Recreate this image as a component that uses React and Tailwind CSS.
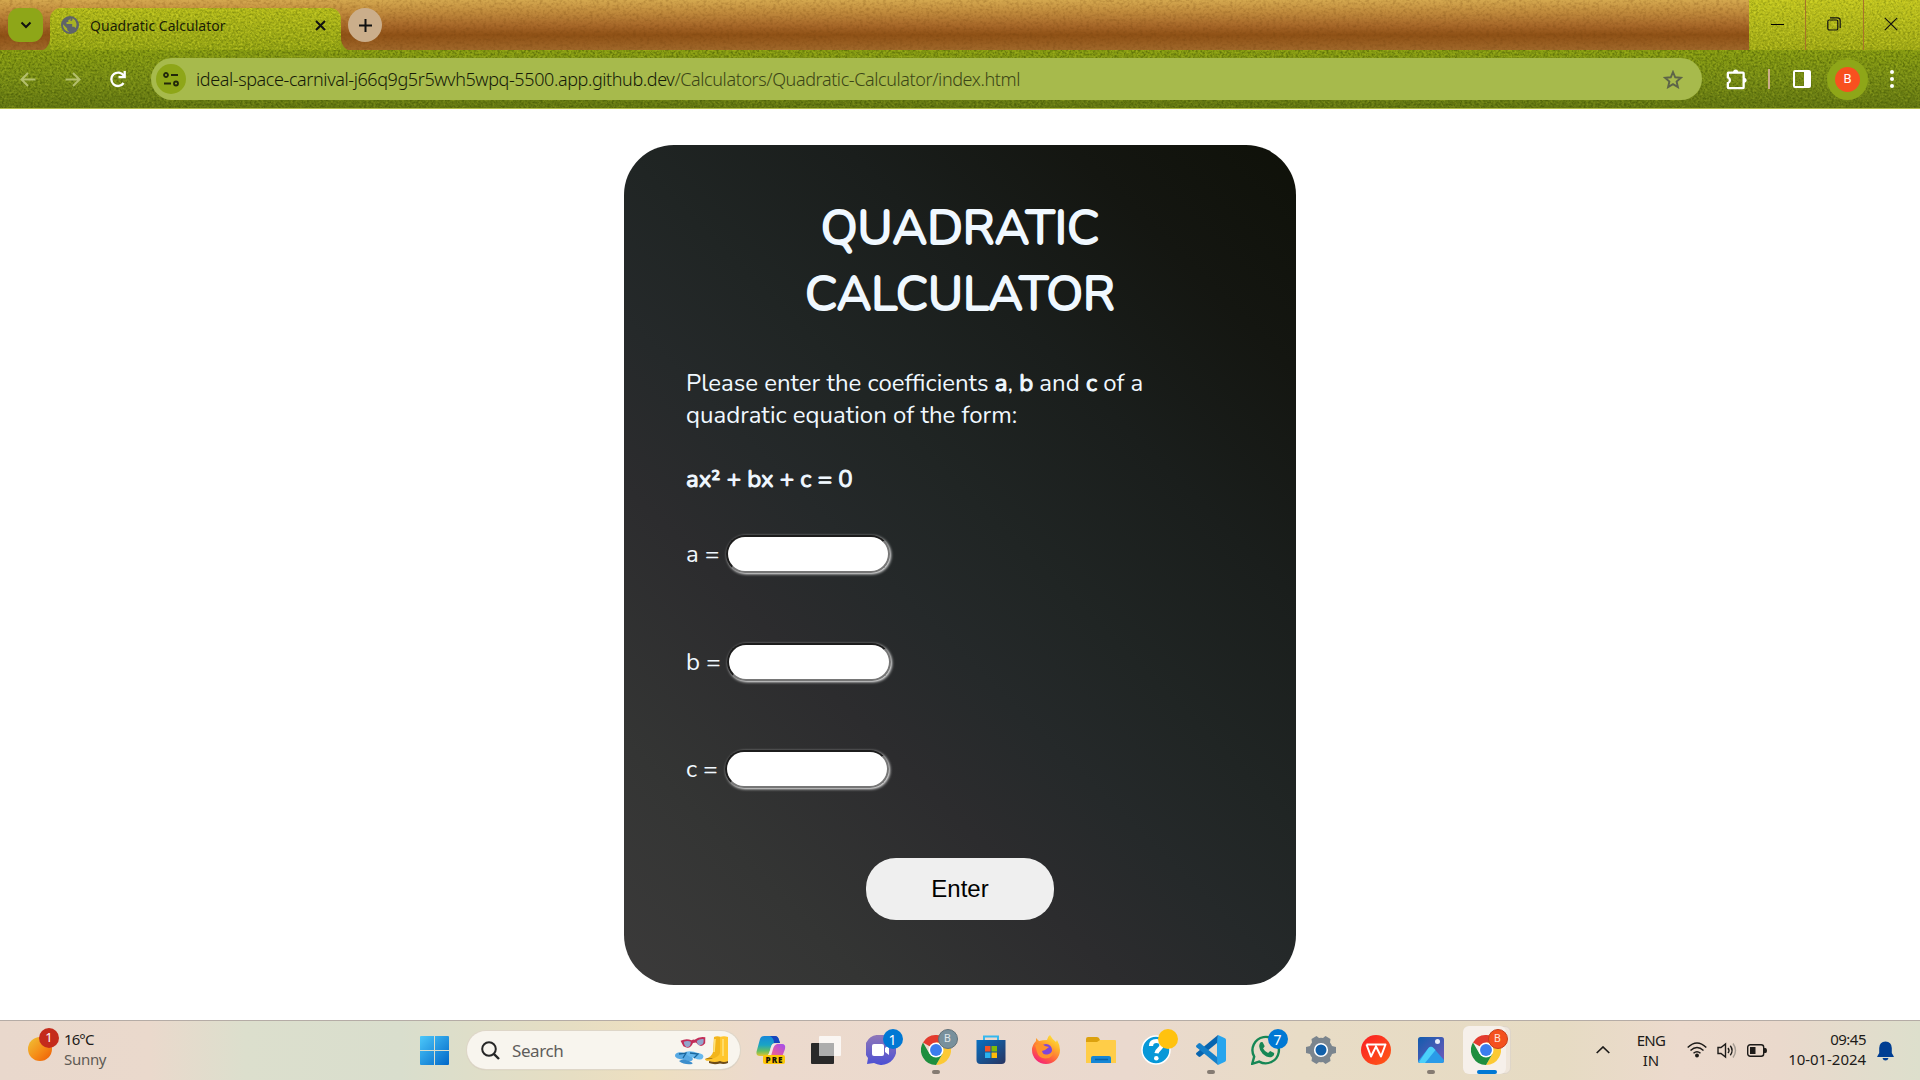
import React from "react";

function Spread({ className = "", children }) {
  return <span className={"inline-block whitespace-nowrap " + className}>{children}</span>;
}

function Strong({ children }) {
  return <span className="[-webkit-text-stroke:1px_currentColor]">{children}</span>;
}

function Texture({ id, seed, w, h, className, matrix, freq = "0.42 0.5" }) {
  return (
    <svg className={"absolute inset-0 pointer-events-none " + className} width={w} height={h} aria-hidden="true">
      <filter id={id} x="0" y="0" width="100%" height="100%" colorInterpolationFilters="sRGB">
        <feTurbulence type="fractalNoise" baseFrequency={freq} numOctaves="2" seed={seed} stitchTiles="stitch" />
        <feColorMatrix type="matrix" values={matrix} />
      </filter>
      <rect width={w} height={h} filter={`url(#${id})`} />
    </svg>
  );
}

const DARK_GRASS = "0 0 0 0 0.22  0 0 0 0 0.29  0 0 0 0 0  2.6 0 0 0 -1.0";
const LIGHT_GRASS = "0 0 0 0 0.86  0 0 0 0 0.88  0 0 0 0 0.2  0 2.6 0 0 -1.15";
const WOOD = "0 0 0 0 0.4  0 0 0 0 0.22  0 0 0 0 0.03  1.6 0 0 0 -0.7";

function TabStrip() {
  return (
    <div className="relative flex h-[50px] bg-[linear-gradient(180deg,#d5a94f_0%,#c08a3c_25%,#a8692a_50%,#8f5116_70%,#a0682a_100%)]">
      <Texture id="wood" seed="4" w="1920" h="50" matrix={WOOD} freq="0.3 0.35" className="opacity-40" />
      <div className="relative flex w-full items-start">
        <button className="ml-2 mt-2 flex h-[34px] w-[35px] shrink-0 items-center justify-center rounded-[11px] bg-[#8ea618]">
          <svg width="12" height="8" viewBox="0 0 12 8" fill="none" stroke="#111" strokeWidth="2"><path d="M1.5 1.5 6 6l4.500-4.500" /></svg>
        </button>
        <svg className="mt-10 h-[10px] w-[7px] shrink-0" viewBox="0 0 7 10"><path d="M7 0v10H0Q5 8 7 0" fill="#8b9b14" /></svg>
        <div className="relative mt-2 flex h-[42px] w-[291px] shrink-0 items-start overflow-hidden rounded-t-[11px] bg-[linear-gradient(180deg,#b9be1c,#95a514)]">
          <Texture id="tabDark" seed="7" w="291" h="42" matrix={DARK_GRASS} className="opacity-35" />
          <Texture id="tabLight" seed="7" w="291" h="42" matrix={LIGHT_GRASS} className="opacity-50" />
          <div className="relative flex h-[34px] w-full items-center pl-[11px] pr-[15px]">
            <svg width="18" height="18" viewBox="0 0 18 18"><circle cx="9" cy="9" r="9" fill="#5f6368" /><path d="M9.500 1.800c-.2 1.600-.8 2.100-2.200 2.200v2H5.500v2h5.700v2.800h1.300c1 0 1.700.6 2 1.500A7.200 7.200 0 0 0 12 2.500l-.5-.2v1.200c0 .8-.8 1.500-2 1.500ZM2 8.200l4.200 4.200v1.200c0 .9.700 1.500 1.600 1.600V16A7.200 7.200 0 0 1 2 8.200Z" fill="#a9b325" /></svg>
            <Spread className="ml-[11px] text-[14px] tracking-[0.040px] text-[#1b1e06]">Quadratic Calculator</Spread>
            <svg className="ml-auto" width="11" height="11" viewBox="0 0 11 11" stroke="#111" strokeWidth="2"><path d="m1 1 9 9M10 1l-9 9" /></svg>
          </div>
        </div>
        <svg className="mt-10 h-[10px] w-[7px] shrink-0" viewBox="0 0 7 10"><path d="M0 0v10h7Q2 8 0 0" fill="#8b9b14" /></svg>
        <button className="mt-2 flex size-[34px] shrink-0 items-center justify-center rounded-full bg-[#cbae8b]">
          <svg width="13" height="13" viewBox="0 0 13 13" stroke="#111" strokeWidth="2"><path d="M6.500 0v13M0 6.500h13" /></svg>
        </button>
        <div className="relative ml-auto flex h-[50px] w-[171px] overflow-hidden bg-[linear-gradient(180deg,#c6c820,#a0a815)]">
          <Texture id="winDark" seed="9" w="171" h="50" matrix={DARK_GRASS} className="opacity-30" />
          <Texture id="winLight" seed="9" w="171" h="50" matrix={LIGHT_GRASS} className="opacity-60" />
          <div className="relative flex w-[57px] items-center justify-center border-r border-[#a8732a]"><i className="mt-[-1px] h-px w-[13px] bg-black" /></div>
          <div className="relative flex w-[58px] items-center justify-center border-r border-[#a8732a] pr-[2px]">
            <svg className="-mt-0.5" width="14" height="14" viewBox="0 0 14 14" fill="none" stroke="#111" strokeWidth="1.200"><rect x=".8" y="3" width="10" height="10" rx="1.500" /><path d="M3 .8h7.500a2.700 2.700 0 0 1 2.700 2.700V11" /></svg>
          </div>
          <div className="relative flex w-14 items-center justify-center pr-0.5"><svg className="-mt-0.5" width="14" height="14" viewBox="0 0 14 14" stroke="#111" strokeWidth="1.200"><path d="m.8.8 12.400 12.400M13.200.8.8 13.200" /></svg></div>
        </div>
      </div>
    </div>
  );
}

function Toolbar() {
  return (
    <div className="relative flex h-[59px] items-start border-b border-[#b3be4a] bg-[linear-gradient(180deg,#8ba013,#7b9017_50%,#637713)]">
      <Texture id="barDark" seed="3" w="1920" h="58" matrix={DARK_GRASS} className="opacity-50" />
      <Texture id="barLight" seed="3" w="1920" h="58" matrix={LIGHT_GRASS} className="opacity-20" />
      <div className="relative flex h-[58px] w-full items-center">
        <svg className="ml-5" width="16" height="15" viewBox="0 0 16 15" fill="none" stroke="#b4bf6c" strokeWidth="2"><path d="M15.500 7.500H2M8 1 1.500 7.500 8 14" /></svg>
        <svg className="ml-[29px]" width="16" height="15" viewBox="0 0 16 15" fill="none" stroke="#b4bf6c" strokeWidth="2"><path d="M.5 7.500H14M8 1l6.500 6.500L8 14" /></svg>
        <svg className="ml-[28px]" width="18" height="17" viewBox="0 0 18 17" fill="none" stroke="#fff" strokeWidth="2.300"><path d="M14.600 12a6.700 6.700 0 1 1 .1-7.300M15.700 0v6.200H9.500" /></svg>
        <div className="ml-6 flex h-[42px] w-[1551px] items-center rounded-full bg-[#a7ba4c] pl-[5px] pr-[19px]">
          <span className="flex size-[30px] shrink-0 items-center justify-center rounded-full bg-[#8ea618]">
            <svg width="16" height="15" viewBox="0 0 16 15" fill="none" stroke="#22270a" strokeWidth="1.800"><circle cx="3" cy="3" r="2" /><path d="M8 3h7M1 11.500h7" /><circle cx="13" cy="11.500" r="2" /></svg>
          </span>
          <Spread className="ml-[10px] text-[18px] font-[350] tracking-[-0.400px] text-[#161b08]">ideal-space-carnival-j66q9g5r5wvh5wpq-5500.app.github.dev<span className="text-[#3b4516]">/Calculators/Quadratic-Calculator/index.html</span></Spread>
          <svg className="ml-auto" width="20" height="19" viewBox="0 0 20 19" fill="none" stroke="#5d6448" strokeWidth="1.900"><path d="m10 2 2.200 5.300 5.700.5-4.300 3.700 1.300 5.600-4.900-3-4.900 3 1.300-5.600-4.300-3.700 5.700-.5Z" /></svg>
        </div>
        <svg className="ml-6" width="22" height="21" viewBox="0 0 22 21" fill="#fff"><path fillRule="evenodd" d="M2.500 2.500H7a2.800 2.800 0 0 1 5.300 0H17a1.800 1.800 0 0 1 1.800 1.800v4.500a2.600 2.600 0 0 1 0 5v4.500A1.800 1.800 0 0 1 17 20.200H2.500a1.800 1.800 0 0 1-1.800-1.800v-5.200a2 2 0 0 0 0-4V4.300a1.800 1.800 0 0 1 1.800-1.800Zm.5 2.200v3a4 4 0 0 1 0 7V18h13.500V4.700Z" /></svg>
        <i className="ml-[20px] h-5 w-0.5 bg-[#cbae8b]" />
        <svg className="ml-[23px]" width="18" height="18" viewBox="0 0 18 18"><rect x="1" y="1" width="16" height="16" rx="1" fill="none" stroke="#fff" strokeWidth="2" /><path d="M11 1h6v16h-6z" fill="#fff" /></svg>
        <span className="ml-4 flex size-[41px] items-center justify-center rounded-full bg-[#8ea618]"><b className="flex size-[25px] items-center justify-center rounded-full bg-[#f8501f] font-['Roboto'] text-[13px] font-normal text-white">B</b></span>
        <div className="ml-[22px] flex flex-col gap-[3px]"><i className="size-1 rounded-full bg-white" /><i className="size-1 rounded-full bg-white" /><i className="size-1 rounded-full bg-white" /></div>
      </div>
    </div>
  );
}

function Field({ name, className, gap }) {
  return (
    <label className={"flex h-[38px] items-center " + className}>
      <span className={"whitespace-nowrap text-[24px] leading-8 " + gap}>{name} =</span>
      <input className="h-[38px] w-[164px] rounded-[20px] border-2 border-b-[#767676] border-l-[#1c1c1c] border-r-[#767676] border-t-[#1c1c1c] bg-white px-4 text-black shadow-[1px_1px_3px_#fff] outline-none" />
    </label>
  );
}

function Calculator() {
  return (
    <main className="flex h-[911px] justify-center pt-9">
      <section className="flex h-[840px] w-[672px] flex-col rounded-[50px] bg-[linear-gradient(45deg,#3b3a3a_0%,#343534_16%,#2c2c2e_33%,#25292a_44%,#202524_55%,#1a1e1c_70%,#141611_85%,#0f1109_100%)] px-[62px] font-['Nunito','Open_Sans',sans-serif] text-[#f0f8ff]">
        <h1 className="mt-[50px] flex flex-col items-center text-[48px] font-normal leading-[66px] [-webkit-text-stroke:1.800px_currentColor]">
          <Spread>QUADRATIC</Spread>
          <Spread>CALCULATOR</Spread>
        </h1>
        <p className="mt-[40px] flex flex-col text-[24px] leading-8">
          <Spread>Please enter the coefficients <Strong>a</Strong>, <Strong>b</Strong> and <Strong>c</Strong> of a</Spread>
          <Spread>quadratic equation of the form:</Spread>
        </p>
        <p className="mt-8 text-[24px] leading-8"><Spread><Strong>ax² + bx + c = 0</Strong></Spread></p>
        <Field name="a" className="mt-[40px]" gap="w-[40px]" />
        <Field name="b" className="mt-[70px]" gap="w-[41px]" />
        <Field name="c" className="mt-[69px]" gap="w-[38.500px]" />
        <button className="mt-[70px] h-[62px] w-[188px] self-center rounded-[30px] bg-[#efefef] font-['Liberation_Sans',sans-serif] text-[24px] text-black">Enter</button>
      </section>
    </main>
  );
}

function Slot({ children, dot, active }) {
  return (
    <div className={"relative flex h-12 w-[55px] shrink-0 items-center justify-center"}>
      {active && <i className="absolute left-[5px] top-0 h-12 w-12 rounded-md border border-[#ded5c8] bg-[#efe6db]" />}
      {active && <i className="absolute left-[5px] top-0 h-12 w-[43px] rounded-md bg-[#f6f0ea]" />}
      <div className="relative">{children}</div>
      {dot && <i className="absolute bottom-0 left-6 h-1 w-2 rounded-full bg-[#857b72]" />}
      {active && <i className="absolute bottom-0 left-[19px] h-1 w-5 rounded-full bg-[#0078d4]" />}
    </div>
  );
}

function Badge({ className, children }) {
  return <b className={"absolute -right-[7px] -top-[6px] flex size-5 items-center justify-center rounded-full font-normal " + className}>{children}</b>;
}

function ChromeLogo() {
  return (
    <svg width="30" height="30" viewBox="0 0 48 48">
      <path d="M24 24 3.200 12A24 24 0 0 1 44.800 12Z" fill="#e33b2e" /><path d="M24 24V12h20.800A24 24 0 0 1 24 48l10.400-18Z" fill="#fcc934" /><path d="M3.200 12A24 24 0 0 0 24 48l10.400-18-20.800 0Z" fill="#1e8e3e" />
      <circle cx="24" cy="24" r="12" fill="#fff" /><circle cx="24" cy="24" r="9.500" fill="#3b7ded" />
    </svg>
  );
}

function SeasonArt() {
  return (
    <svg width="56" height="30" viewBox="0 0 56 30">
      <g transform="rotate(-8 19 8)"><path d="M7 4q6-2 11 1 2-1 3 0 5-3 11-1l-1 6q-5 5-9-2h-3q-4 7-10 2Z" fill="#c22d58" /><path d="M10 5.500q4-1 7 1-1 6-5 4.500-2-1-2-5.500M23 6.500q3-2 7-1 0 5-3 5.500-4 1-4-4.500" fill="#92a5cc" /></g>
      <path d="M1 20q2-4 9-2 8 2 9 6-1 4-8 1Q0 24 1 20" fill="#57a9e3" /><path d="M11 17q6-2 13 1 7 1 5 5-2 3-9 0-8-2-9-6" fill="#68b9ee" /><path d="M5 26q4-3 10 0 5 2 3 3-8 1-13-3" fill="#3d8ecc" /><path d="m5 19 7-1-3 5M16 18l8 1-4 4" fill="none" stroke="#19679e" strokeWidth="1.300" />
      <path d="M40 2q3-1.500 7 0l-1 18q-1 5-7 5-8 2-8-1 7-2 8-7Z" fill="#f2b51b" /><path d="M46 2q4-1.500 8 0v24q-3 3-7 1-6 2-11 0-2-2 1-3 8-2 9-6Z" fill="#ffc62d" /><path d="M35 26q6 2 11 0 4 2 8 0v2q-4 1.500-8 .5-6 1.500-11-.5ZM31 23q5 1 8 0" fill="#6d4b16" /><path d="M41 4 40 17M49 4v17" stroke="#ffe278" strokeWidth="1.600" />
    </svg>
  );
}

function Taskbar() {
  return (
    <footer className="relative flex h-[60px] items-start border-t border-[#b5aca6] bg-[linear-gradient(90deg,#e9d8cc_0px,#ead9cc_150px,#dcdfcd_245px,#d9decd_400px,#e6dec3_570px,#eddfc0_650px,#ecdacd_760px,#ead9ce_1130px,#e8dcc6_1300px,#e6dbc3_1560px,#ecdacd_1680px,#ead9cc_1780px,#dddfcc_1920px)] font-['Noto_Sans',sans-serif]">
      <div className="flex w-[420px] shrink-0 pt-[7px]">
        <div className="relative ml-7 mt-[9px] size-6 rounded-full bg-[linear-gradient(135deg,#efc438,#f58c17_55%,#ed5a05)]"><b className="absolute -top-[9px] left-[11px] flex size-5 items-center justify-center rounded-full bg-[#c42b1c] text-[13px] font-normal text-white">1</b></div>
        <div className="ml-3 pt-px text-[15px] leading-5"><div className="text-[#1d1b19]"><Spread className="tracking-[-0.900px]">16°C</Spread></div><div className="text-[#605b55]"><Spread className="tracking-[-0.300px]">Sunny</Spread></div></div>
      </div>
      <svg className="mt-[15px] shrink-0" width="29" height="29" viewBox="0 0 29 29"><defs><linearGradient id="win" x1="0" y1="0" x2="1" y2="1"><stop stopColor="#4cc8fa" /><stop offset="1" stopColor="#0067c8" /></linearGradient></defs><path d="M1 0h13v14H0V1a1 1 0 0 1 1-1Zm14 0h13a1 1 0 0 1 1 1v13H15ZM0 15h14v14H1a1 1 0 0 1-1-1Zm15 0h14v13a1 1 0 0 1-1 1H15Z" fill="url(#win)" /></svg>
      <div className="ml-[18px] mt-[10px] flex h-[38px] w-[273px] shrink-0 items-center rounded-full bg-[#f8f5ee] pl-3.5 pr-[10px] shadow-[0_0_0_1px_#ded6c8,0_1px_1px_#b9b2a5]">
        <svg width="19" height="19" viewBox="0 0 19 19" fill="none" stroke="#262626" strokeWidth="2"><circle cx="8" cy="8" r="6.800" /><path d="m12.800 12.800 5.200 5.200" strokeWidth="2.400" /></svg>
        <Spread className="ml-[12px] pt-px text-[17px] tracking-[-0.400px] text-[#5f5d5b]">Search</Spread>
        <span className="ml-auto"><SeasonArt /></span>
      </div>
      <div className="ml-[3px] mt-[5px] flex shrink-0">
        <Slot>
          <svg width="30" height="30" viewBox="0 0 30 30"><defs><linearGradient id="cp1" x1="0" y1="0" x2="0" y2="1"><stop stopColor="#1687d9" /><stop offset=".45" stopColor="#19a4c5" /><stop offset=".75" stopColor="#65bd62" /><stop offset="1" stopColor="#e3c52f" /></linearGradient><linearGradient id="cp2" x1="1" y1="0" x2="0" y2="1"><stop stopColor="#a04df0" /><stop offset=".5" stopColor="#e15ba6" /><stop offset="1" stopColor="#f29150" /></linearGradient></defs><path d="M8 1h11q3 0 4 4l1 3h-5q-3 0-4 4l-2 6q-1 3-4 3H4q-5 0-3-6L4 4q1-3 4-3" fill="url(#cp1)" /><path d="M14 1h5q3 0 4 4l1 3h-6q0-5-4-7" fill="#1744bd" /><path d="M19 9h7q4 0 3 5l-3 8q-1 4-5 4H8q4 0 5-4l2-8q1-5 4-5" fill="url(#cp2)" /><path d="M17 9h4q-3 1-4 5l-2 7h-4q2-1 3-5 1-6 3-7" fill="#f3e9e4" /><rect x="7" y="20" width="22" height="9" rx="2" fill="#fcc708" /><text x="9.500" y="27.500" fontFamily="Open Sans" fontSize="8" fontWeight="800" textLength="17" fill="#161208">PRE</text></svg>
        </Slot>
        <Slot><svg width="30" height="30" viewBox="0 0 30 30"><rect y="8" width="23" height="21" rx="1" fill="#292929" /><rect x="8" y="1" width="22" height="20" rx="1" fill="#fff" opacity=".75" /><path d="M8 8h15v13H8z" fill="#a6a6a6" opacity=".8" /></svg></Slot>
        <Slot><svg width="30" height="30" viewBox="0 0 30 30"><defs><linearGradient id="chat" x1="0" y1="0" x2="0" y2="1"><stop stopColor="#8f77b8" /><stop offset="1" stopColor="#4c50d4" /></linearGradient></defs><path d="M14 0a15 15 0 1 1-6 28L1 29l1-6A14 14 0 0 1 14 0" fill="url(#chat)" /><rect x="6" y="9" width="12" height="12" rx="2" fill="#fff" /><path d="m19 13 4-3v10l-4-3Z" fill="#fff" /></svg><Badge className="bg-[#0078d4] text-[14px] text-white">1</Badge></Slot>
        <Slot dot><ChromeLogo /><Badge className="border border-[#60717a] bg-[#78909c] font-['Roboto'] text-[11px] text-[#dfe6e9]">B</Badge></Slot>
        <Slot><svg width="30" height="30" viewBox="0 0 30 30"><defs><linearGradient id="shop" x1="0" y1="0" x2="1" y2="1"><stop stopColor="#0870c1" /><stop offset="1" stopColor="#293460" /></linearGradient></defs><path d="M8 7V1.500h14V7" fill="none" stroke="#35b8ef" strokeWidth="2" /><path d="M.5 5h29v20q0 4-4 4h-21q-4 0-4-4Z" fill="url(#shop)" /><path d="M9 11h5.500v5.500H9z" fill="#f35325" /><path d="M15.500 11H21v5.500h-5.500z" fill="#81bc06" /><path d="M9 17.500h5.500V23H9z" fill="#29b2ee" /><path d="M15.500 17.500H21V23h-5.500z" fill="#ffba08" /></svg></Slot>
        <Slot><svg width="30" height="30" viewBox="0 0 30 30"><defs><linearGradient id="fox" x1=".9" y1="0" x2=".3" y2="1"><stop stopColor="#fff03d" /><stop offset=".35" stopColor="#ffb22a" /><stop offset=".7" stopColor="#ff623d" /><stop offset="1" stopColor="#f5217b" /></linearGradient></defs><path d="M16 5q1-4 3-5 2 4 6 7l1-2q3 5 3 10a14 14 0 1 1-28 0q0-5 4-9l0-3 3 3q4-1 8-1" fill="url(#fox)" /><circle cx="15" cy="15" r="6" fill="#8046d8" /><path d="M4 10q6-3 10 1l4 1-4 3-3 1q1 5 7 3 4-2 4-6 2 7-4 10-10 2-12-6-1-4-2-7" fill="#ff922c" /></svg></Slot>
        <Slot><svg width="30" height="30" viewBox="0 0 30 30"><path d="M0 4q0-2 2-2h9q2 0 3 3H29v9H0Z" fill="#dca10e" /><path d="M0 7h11l3-2h15q1 0 1 1v22H0Z" fill="#ffcd48" /><path d="M5 28v-5q0-2 2-2h16q2 0 2 2v5Z" fill="#1586d5" /><path d="M9 24.500h13" stroke="#0762a8" strokeWidth="1.500" /></svg></Slot>
        <Slot><svg width="30" height="30" viewBox="0 0 30 30"><circle cx="15" cy="15" r="14" fill="#0798d8" stroke="#fff" strokeWidth="1.500" /><path d="M10 11q0-5 5.500-5 5 0 5 4.300c0 4-4.500 3.500-5 8" fill="none" stroke="#fff" strokeWidth="4.200" /><circle cx="15.300" cy="23.300" r="2.300" fill="#fff" /></svg><Badge className="bg-[#ffc20e]" /></Slot>
        <Slot dot><svg width="30" height="30" viewBox="0 0 30 30"><path d="m22 0 7 3.200q1 .5 1 1.800v20q0 1.300-1 1.800L22 30l-1-6V6Z" fill="#27a5ee" /><path d="m22 0-1 8L4.500 21.500q-1 .8-2 0l-2-1.700q-1-1 0-2Z" fill="#0764af" /><path d="m22 30-1-8L4.500 8.500q-1-.8-2 0l-2 1.700q-1 1 0 2Z" fill="#147fc9" /></svg></Slot>
        <Slot><svg width="30" height="30" viewBox="0 0 30 30"><path d="m1.200 28.800 2-7.200a13.200 13.200 0 1 1 5 5Z" fill="none" stroke="#168755" strokeWidth="2.400" /><path d="M9 8q1-1.500 2.700-.8l2 4-1.600 2.200q1.800 3.300 5 4.600l2-2 4 2q.5 3-3 4.200-4 .7-8.500-3.500Q6.500 13 9 8" fill="#168755" /></svg><Badge className="bg-[#0078d4] text-[14px] text-white">7</Badge></Slot>
        <Slot><svg width="30" height="30" viewBox="0 0 30 30"><path d="m10.500 1 2.500 2q2-.6 4 0l2.500-2 5 3-.5 3.500q1.400 1.500 2 3.500l4 1v6l-4 1q-.6 2-2 3.500l.5 3.500-5 3-2.500-2q-2 .6-4 0l-2.500 2-5-3 .5-3.500Q4.600 21 4 19l-4-1v-6l4-1q.6-2 2-3.500L5.500 4Z" fill="#7b858e" /><circle cx="15" cy="15" r="6.300" fill="#1160aa" stroke="#fff" strokeWidth="1.600" /></svg></Slot>
        <Slot><svg width="30" height="30" viewBox="0 0 30 30"><defs><linearGradient id="wps" x1="0" y1="0" x2="1" y2="1"><stop stopColor="#fa1d25" /><stop offset="1" stopColor="#ff5b16" /></linearGradient></defs><circle cx="15" cy="15" r="15" fill="url(#wps)" /><path d="M5.500 9.500H18M21 9.500h3.500L20 21.500l-5-10-5 10L5.500 9.500M10 21.500l3-6M20 21.500 24.500 9.500H18" fill="none" stroke="#fff" strokeWidth="2" strokeLinejoin="round" /></svg></Slot>
        <Slot dot><svg width="26" height="26" viewBox="0 0 26 26"><defs><linearGradient id="pic" x1="0" y1="0" x2="1" y2="1"><stop stopColor="#125cae" /><stop offset="1" stopColor="#7359ba" /></linearGradient></defs><rect width="26" height="26" rx="2.500" fill="url(#pic)" /><path d="M0 24 10.500 11q2.500-2.500 5 0L26 23v1q0 2-2 2H2q-2 0-2-2" fill="#2a9be8" /><path d="M1 25 10.500 11q2.500-2.500 5 0l2 2L7 26H2Z" fill="#4bd0fa" /><circle cx="19.500" cy="4.500" r="2.500" fill="#e8eefb" /></svg></Slot>
        <Slot active><ChromeLogo /><Badge className="border border-[#c43e1b] bg-[#f4511e] font-['Roboto'] text-[11px] text-[#ffe3da]">B</Badge></Slot>
      </div>
      <div className="ml-auto flex h-[60px] items-start text-[#1d1b19]">
        <svg className="mt-[25px]" width="14" height="8" viewBox="0 0 14 8" fill="none" stroke="#1d1b19" strokeWidth="1.700"><path d="m.7 7 6.300-6 6.300 6" /></svg>
        <div className="ml-[26px] w-[30px] pt-[9px] text-center text-[15px] leading-5"><div><Spread className="tracking-[-0.700px]">ENG</Spread></div><div>IN</div></div>
        <svg className="ml-[21px] mt-[21px]" width="20" height="16" viewBox="0 0 20 16" fill="none" stroke="#1d1b19" strokeWidth="1.500"><path d="M.7 5.500Q10-3.500 19.300 5.500M3.500 8.500q6.500-6 13 0M6.500 11.300q3.500-3 7 0" /><circle cx="10" cy="13.500" r="1.200" fill="#1d1b19" /></svg>
        <svg className="ml-[10px] mt-[21px]" width="20" height="17" viewBox="0 0 20 17" fill="none" stroke="#1d1b19" strokeWidth="1.400"><path d="M1 5.500h3L8.500 2v13L4 11.500H1ZM11 6q2 2.500 0 5M13.300 3.800q3.600 4.700 0 9.400" /><path d="M16 1.500q5 7 0 14" stroke="#a69d94" /></svg>
        <svg className="ml-[10px] mt-[23px]" width="20" height="13" viewBox="0 0 20 13"><rect x=".7" y=".7" width="16" height="11.600" rx="2.500" fill="none" stroke="#1d1b19" strokeWidth="1.400" /><path d="M3 3h5.500v7H3z" fill="#1d1b19" /><path d="M17 4h1.500q1.500 0 1.500 2.500T18.500 9H17Z" fill="#1d1b19" /></svg>
        <div className="ml-5 w-[79px] pt-[8px] text-right text-[15px] leading-5"><div><Spread className="tracking-[-0.500px]">09:45</Spread></div><div><Spread className="tracking-[-0.050px]">10-01-2024</Spread></div></div>
        <svg className="ml-[11px] mr-[26px] mt-[20px]" width="17" height="20" viewBox="0 0 17 20" fill="#003e92"><path d="M8.500.5q6 0 6.300 6.500v5l2 3.500v.5H.2v-.5l2-3.500V7Q2.500.5 8.500.5M5.500 17h6q-.6 2.500-3 2.500t-3-2.500" /></svg>
      </div>
    </footer>
  );
}

export default function App() {
  return (
    <div className="flex h-[1080px] w-[1920px] flex-col overflow-hidden bg-white font-['Noto_Sans',sans-serif]">
      <TabStrip />
      <Toolbar />
      <Calculator />
      <Taskbar />
    </div>
  );
}
